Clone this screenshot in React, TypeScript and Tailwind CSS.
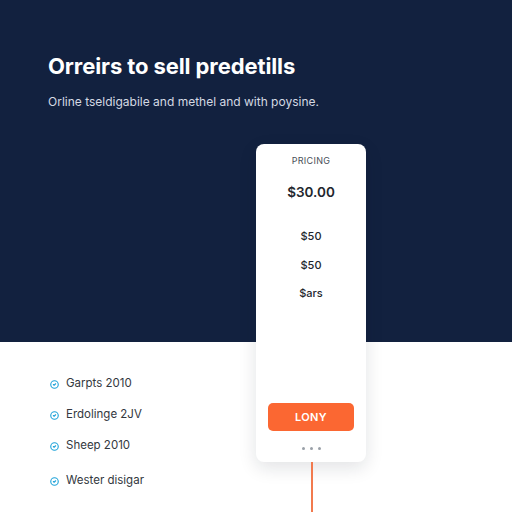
import { CircleCheck } from 'lucide-react';

const items = [
    { label: 'Garpts 2010', gap: 'mt-0' },
    { label: 'Erdolinge 2JV', gap: 'mt-[17px]' },
    { label: 'Sheep 2010', gap: 'mt-[17px]' },
    { label: 'Wester disigar', gap: 'mt-[21px]' },
];

export default function App() {
    return (
        <div className="relative h-[512px] w-[512px] overflow-hidden bg-white font-['Inter',sans-serif]">
            <section className="h-[342px] bg-[#12213f] px-12 pt-[50px]">
                <h1 className="text-[22px] font-bold tracking-[-0.1px] text-white">
                    Orreirs to sell predetills
                </h1>
                <p className="mt-[10px] text-[12px] text-[#d4d9e3]">
                    Orline tseldigabile and methel and with poysine.
                </p>
            </section>

            <ul className="flex flex-col pl-[50px] pt-[35px]">
                {items.map((item) => (
                    <li
                        key={item.label}
                        className={`flex h-[14px] items-center gap-[7px] ${item.gap}`}
                    >
                        <CircleCheck className="h-[9px] w-[9px] text-[#1fa3d9]" strokeWidth={3} />
                        <span className="text-[11.5px] text-[#333840]">{item.label}</span>
                    </li>
                ))}
            </ul>

            <div className="absolute left-[256px] top-[144px] flex h-[318px] w-[110px] flex-col items-center rounded-[8px] bg-white shadow-[0_6px_18px_rgba(15,23,42,0.12)]">
                <span className="mt-[10px] text-[9px] tracking-[0.3px] text-[#4a4f58]">PRICING</span>
                <span className="mt-[14px] text-[13.5px] font-semibold text-[#22262d]">$30.00</span>
                <span className="mt-[26px] text-[11px] font-medium text-[#22262d]">$50</span>
                <span className="mt-[13px] text-[11px] font-medium text-[#22262d]">$50</span>
                <span className="mt-[11px] text-[11px] font-medium text-[#22262d]">$ars</span>
                <button className="mt-auto h-[28px] w-[86px] rounded-[5px] bg-[#fb6732] text-[11px] font-semibold tracking-[0.4px] text-white">
                    LONY
                </button>
                <div className="mb-[12px] mt-[16px] flex gap-[5px]">
                    <span className="h-[3px] w-[3px] rounded-full bg-[#9aa0a8]" />
                    <span className="h-[3px] w-[3px] rounded-full bg-[#9aa0a8]" />
                    <span className="h-[3px] w-[3px] rounded-full bg-[#9aa0a8]" />
                </div>
            </div>
            <div className="absolute left-[311px] top-[462px] h-[50px] w-[1.5px] bg-[#f27a4e]" />
        </div>
    );
}
